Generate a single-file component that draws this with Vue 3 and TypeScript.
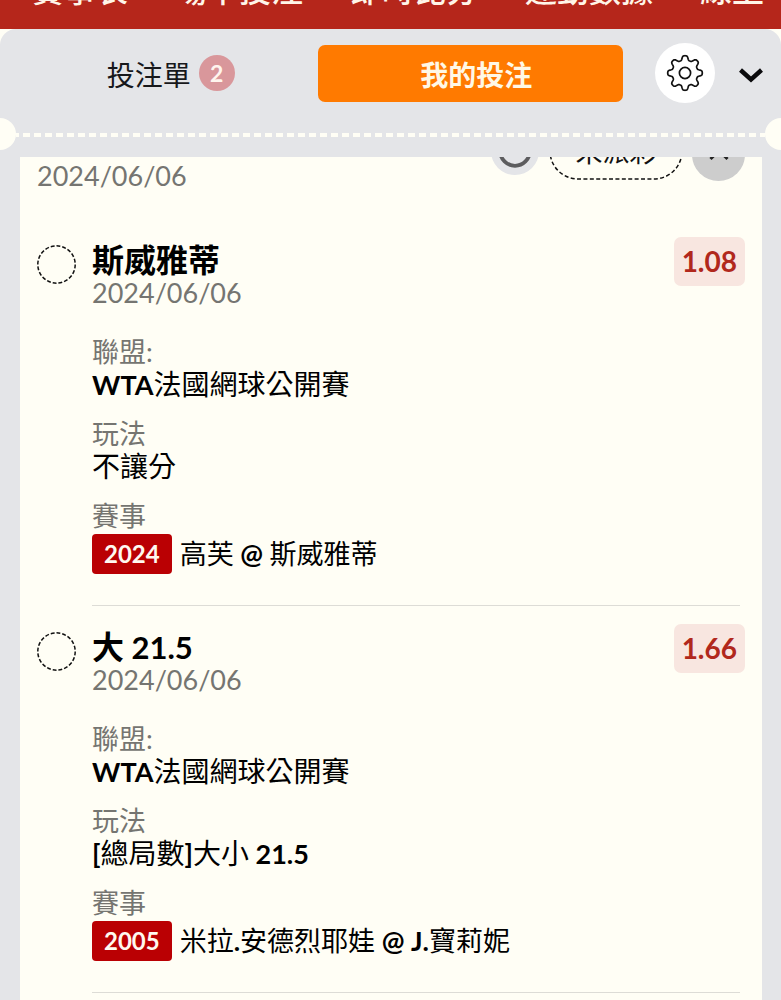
<script setup lang="ts">
interface Run {
  text: string
  latin: boolean
}

interface Bet {
  title: string
  date: string
  odds: string
  league: string
  play: string
  code: string
  match: string
}

const navItems: string[] = ['賽事表', '場中投注', '即時比分', '運動數據', '線上']

const bets: Bet[] = [
  {
    title: '斯威雅蒂',
    date: '2024/06/06',
    odds: '1.08',
    league: 'WTA法國網球公開賽',
    play: '不讓分',
    code: '2024',
    match: '高芙 @ 斯威雅蒂',
  },
  {
    title: '大 21.5',
    date: '2024/06/06',
    odds: '1.66',
    league: 'WTA法國網球公開賽',
    play: '[總局數]大小 21.5',
    code: '2005',
    match: '米拉.安德烈耶娃 @ J.寶莉妮',
  },
]

// Latin letters and figures are set heavier than the Chinese around them.
function runs(text: string): Run[] {
  const parts = text.match(/[\x20-\x7e]+|[^\x20-\x7e]+/g) ?? []
  return parts.map((part) => ({ text: part, latin: /^[\x20-\x7e]/.test(part) }))
}

// Outline of a cog with eight rounded teeth, centred on the origin.
function cogPath(): string {
  const steps = 192
  const points: string[] = []
  for (let i = 0; i < steps; i++) {
    const angle = (i / steps) * Math.PI * 2
    const wave = Math.tanh(1.7 * Math.cos(angle * 8)) / Math.tanh(1.7)
    const radius = 15.1 + 2.2 * wave
    points.push(`${(radius * Math.cos(angle)).toFixed(2)} ${(radius * Math.sin(angle)).toFixed(2)}`)
  }
  return `M${points.join('L')}Z`
}

const cog = cogPath()
</script>

<template>
  <div class="page">
    <nav class="nav">
      <a v-for="item in navItems" :key="item" href="#">{{ item }}</a>
    </nav>

    <main class="panel">
      <div class="tabs">
        <button class="tab" type="button">投注單<span class="count">2</span></button>
        <button class="tab active" type="button">我的投注</button>
        <button class="gear" type="button" aria-label="設定">
          <svg width="38" height="38" viewBox="-19 -19 38 38" fill="none" stroke="#111" stroke-width="1.7" stroke-linejoin="round">
            <circle r="5.6" />
            <path :d="cog" />
          </svg>
        </button>
        <button class="collapse" type="button" aria-label="收合">
          <svg width="26" height="16" viewBox="0 0 26 16" fill="none" stroke="#0b0b0d" stroke-width="4.4">
            <path d="M2.5 3L13 12.5L23.5 3" />
          </svg>
        </button>
      </div>

      <div class="perforation">
        <span class="notch left"></span>
        <span class="dashes"></span>
        <span class="notch right"></span>
      </div>

      <div class="list">
        <header class="summary">
          <time class="date">2024/06/06</time>
          <div class="actions">
            <button class="refresh" type="button" aria-label="重新整理">
              <svg width="34" height="34" viewBox="0 0 34 34" fill="none" stroke="#5c5c5e" stroke-width="3.8">
                <circle cx="17" cy="17" r="14.8" />
              </svg>
            </button>
            <button class="status" type="button">
              <svg class="outline" width="134" height="58" viewBox="0 0 134 58" fill="none" stroke="#111" stroke-width="1.5" stroke-dasharray="4 2.4">
                <rect x="1" y="1" width="132" height="56" rx="28" />
              </svg>
              未派彩
            </button>
            <button class="toggle" type="button" aria-label="收起">
              <svg width="22" height="14" viewBox="0 0 22 14" fill="none" stroke="#222" stroke-width="3">
                <path d="M2.5 12L11 3.5L19.5 12" />
              </svg>
            </button>
          </div>
        </header>

        <article v-for="bet in bets" :key="bet.title" class="bet">
          <svg class="mark" width="39" height="39" viewBox="0 0 39 39" fill="none" stroke="#111" stroke-width="1.5" stroke-dasharray="4 2">
            <circle cx="19.5" cy="19.5" r="18.7" pathLength="120" />
          </svg>
          <div class="body">
            <h2>
              <span v-for="(run, i) in runs(bet.title)" :key="i" :class="{ latin: run.latin }">{{ run.text }}</span>
            </h2>
            <time class="date">{{ bet.date }}</time>
            <dl>
              <div>
                <dt>聯盟:</dt>
                <dd>
                  <span v-for="(run, i) in runs(bet.league)" :key="i" :class="{ latin: run.latin }">{{ run.text }}</span>
                </dd>
              </div>
              <div>
                <dt>玩法</dt>
                <dd>
                  <span v-for="(run, i) in runs(bet.play)" :key="i" :class="{ latin: run.latin }">{{ run.text }}</span>
                </dd>
              </div>
              <div>
                <dt>賽事</dt>
                <dd class="match">
                  <span class="code">{{ bet.code }}</span>
                  <span class="teams">
                    <span v-for="(run, i) in runs(bet.match)" :key="i" :class="{ latin: run.latin }">{{ run.text }}</span>
                  </span>
                </dd>
              </div>
            </dl>
          </div>
          <span class="odds">{{ bet.odds }}</span>
        </article>
      </div>
    </main>
  </div>
</template>

<style>
body {
  background: #fffef5;
}
</style>

<style scoped>
* {
  box-sizing: border-box;
}

.page {
  display: flex;
  flex-direction: column;
  height: 100vh;
  overflow: hidden;
  background: #fffef5;
  color: #000;
  font-family: Lato, "Noto Sans CJK TC", sans-serif;
  font-size: 27px;
  line-height: 33px;
}

button {
  display: flex;
  align-items: center;
  justify-content: center;
  flex: none;
  padding: 0;
  border: 0;
  background: none;
  color: inherit;
  font: inherit;
}

.nav {
  display: flex;
  flex: none;
  align-items: flex-end;
  gap: 47px;
  height: 29px;
  padding: 0 32px 19px;
  overflow: hidden;
  background: #b5261b;
}

.nav a {
  flex: none;
  color: #fff5e8;
  font-size: 32px;
  font-weight: 500;
  line-height: 40px;
  text-decoration: none;
  white-space: nowrap;
}

.panel {
  display: flex;
  flex: 1;
  flex-direction: column;
  min-height: 0;
  border-radius: 16px 16px 0 0;
  background: #e4e5e8;
}

.tabs {
  display: flex;
  flex: none;
  align-items: center;
  padding: 14px 17px 15px 20px;
}

.tab {
  flex: 1;
  gap: 8px;
  height: 57px;
  padding: 4px 0 0 4px;
  border-radius: 7px;
  color: #17181b;
  font-size: 28px;
}

.tab.active {
  padding-left: 12px;
  background: #ff7a00;
  color: #fff8e6;
  font-weight: 700;
}

.count {
  width: 36px;
  height: 36px;
  margin-bottom: 4px;
  border-radius: 50%;
  background: #d9979b;
  color: #fff5ee;
  font-size: 23px;
  font-weight: 700;
  line-height: 36px;
}

.gear {
  width: 60px;
  height: 60px;
  margin: 0 23px 0 32px;
  border-radius: 50%;
  background: #fff;
}

.collapse {
  width: 26px;
  height: 40px;
  padding-top: 4px;
}

.perforation {
  display: flex;
  flex: none;
  align-items: center;
  height: 32px;
}

.notch {
  width: 16px;
  height: 32px;
  background: #fffef5;
}

.notch.left {
  border-radius: 0 16px 16px 0;
}

.notch.right {
  border-radius: 16px 0 0 16px;
}

.dashes {
  flex: 1;
  height: 4px;
  margin-top: 2px;
  background: repeating-linear-gradient(90deg, #fffef5 0 3px, transparent 3px 7px, #fffef5 7px 11px);
}

.list {
  flex: 1;
  min-height: 0;
  margin: 7px 19px 0 20px;
  padding: 0 17px;
  overflow: hidden;
  background: #fffef5;
}

.summary {
  display: flex;
  justify-content: space-between;
  align-items: flex-end;
  margin-top: -35px;
  padding-bottom: 27px;
}

.actions {
  display: flex;
  align-items: center;
  height: 58px;
  margin-bottom: 12px;
}

.refresh {
  width: 48px;
  height: 48px;
  margin-right: 10px;
  border-radius: 50%;
  background: #e4e5e8;
}

.status {
  position: relative;
  width: 134px;
  height: 58px;
  margin-right: 9px;
  color: #111;
}

.outline {
  position: absolute;
  inset: 0;
}

.toggle {
  width: 53px;
  height: 53px;
  margin-top: 6px;
  border-radius: 50%;
  background: #cdcdcd;
}

.date {
  display: block;
  color: #757571;
}

.bet {
  display: grid;
  grid-template-columns: 39px 1fr auto;
  column-gap: 16px;
  align-items: start;
}

.mark {
  margin-top: 26px;
}

.body {
  grid-column: 2 / 4;
  grid-row: 1;
  margin-right: 5px;
  padding: 24px 0 31px;
  border-bottom: 1px solid #dddcd6;
}

h2 {
  margin: 0;
  font-size: 32px;
  font-weight: 700;
  line-height: 33px;
}

h2 .latin {
  font-size: 31px;
  line-height: 1;
}

dl {
  display: grid;
  gap: 16px;
  margin: 26px 0 0;
}

dt {
  color: #757571;
}

dd {
  margin: 0;
  font-size: 28px;
  white-space: pre-wrap;
}

dd .latin {
  font-size: 27px;
  font-weight: 700;
  line-height: 1;
}

.match {
  display: flex;
  align-items: center;
  gap: 8px;
  padding-top: 2px;
  font-size: 27px;
}

.teams {
  padding-bottom: 2px;
}

.code {
  padding: 0 12px;
  border-radius: 4px;
  background: #ba0003;
  color: #fff8f0;
  font-size: 24px;
  font-weight: 700;
  line-height: 40px;
}

.odds {
  grid-column: 3;
  grid-row: 1;
  margin-top: 18px;
  padding: 0 8px 1px;
  border-radius: 7px;
  background: #f8e6e0;
  color: #b1281c;
  font-size: 28px;
  font-weight: 700;
  line-height: 48px;
}
</style>
